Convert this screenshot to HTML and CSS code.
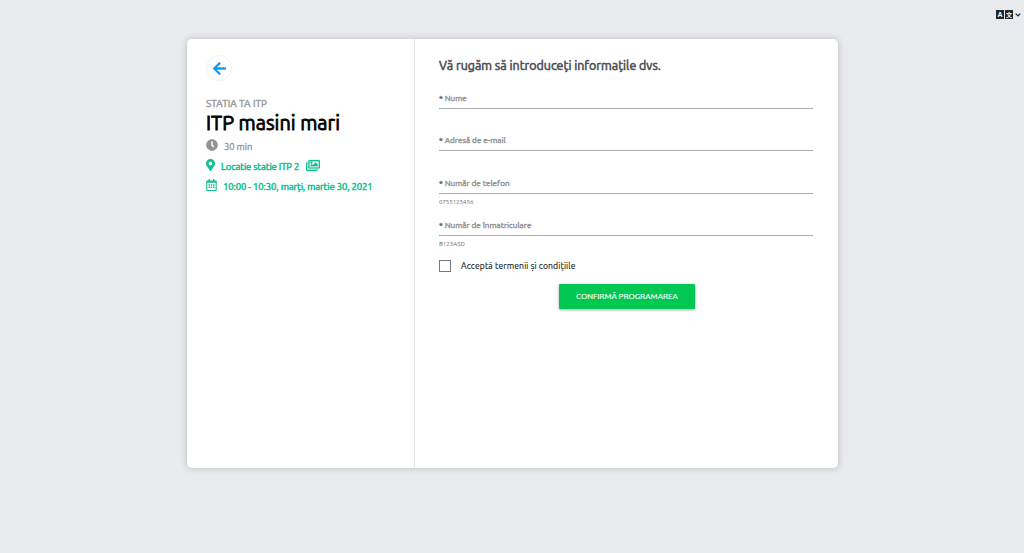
FILE: index.html
```html
<!doctype html>
<html lang="ro">
<head>
    <meta charset="utf-8">
    <meta name="viewport" content="width=device-width, initial-scale=1.0">
    <title>ITP masini mari</title>
    <link rel="stylesheet" href="styles.css">
</head>
<body>
    <header class="topbar">
        <button type="button" class="lang" aria-label="Limba">
            <span class="lang-box">A</span>
            <span class="lang-box lang-cjk">文</span>
            <svg class="chevron" viewBox="0 0 6 4"><path d="M.7.7 3 3 5.3.7"/></svg>
        </button>
    </header>

    <main class="card">
        <aside class="summary">
            <a href="#" class="back" aria-label="Inapoi">
                <svg viewBox="0 0 448 512"><path d="M257.5 445.1l-22.2 22.2c-9.4 9.4-24.6 9.4-33.9 0L7 273c-9.4-9.4-9.4-24.6 0-33.9L201.4 44.7c9.4-9.4 24.6-9.4 33.9 0l22.2 22.2c9.5 9.5 9.3 25-.4 34.3L136.6 216H424c13.3 0 24 10.7 24 24v32c0 13.3-10.7 24-24 24H136.6l120.5 114.8c9.8 9.3 10 24.8.4 34.3z"/></svg>
            </a>
            <div class="station"><span>STATIA TA ITP</span></div>
            <h1><span>ITP masini mari</span></h1>
            <div class="info duration">
                <svg class="icon-clock" viewBox="0 0 512 512"><path d="M256,8C119,8,8,119,8,256S119,504,256,504,504,393,504,256,393,8,256,8Zm92.49,313h0l-20,25a16,16,0,0,1-22.49,2.5h0l-67-49.72a40,40,0,0,1-15-31.23V112a16,16,0,0,1,16-16h32a16,16,0,0,1,16,16V256l58,42.5A16,16,0,0,1,348.49,321Z"/></svg>
                <span>30 min</span>
            </div>
            <div class="info place">
                <svg class="icon-pin" viewBox="0 0 384 512"><path d="M172.268 501.67C26.97 291.031 0 269.413 0 192 0 85.961 85.961 0 192 0s192 85.961 192 192c0 77.413-26.97 99.031-172.268 309.67-9.535 13.774-29.93 13.773-39.464 0zM192 272c44.183 0 80-35.817 80-80s-35.817-80-80-80-80 35.817-80 80 35.817 80 80 80z"/></svg>
                <span>Locatie statie ITP 2</span>
                <svg class="icon-images" viewBox="0 0 576 512"><path d="M480 416v16c0 26.51-21.49 48-48 48H48c-26.51 0-48-21.49-48-48V176c0-26.51 21.49-48 48-48h16v48H54a6 6 0 0 0-6 6v244a6 6 0 0 0 6 6h372a6 6 0 0 0 6-6v-10h48zm42-336H150a6 6 0 0 0-6 6v244a6 6 0 0 0 6 6h372a6 6 0 0 0 6-6V86a6 6 0 0 0-6-6zm6-48c26.51 0 48 21.49 48 48v256c0 26.51-21.49 48-48 48H144c-26.51 0-48-21.49-48-48V80c0-26.51 21.49-48 48-48h384zM264 144c0 22.091-17.909 40-40 40s-40-17.909-40-40 17.909-40 40-40 40 17.909 40 40zm-72 96l39.515-39.515c4.686-4.686 12.284-4.686 16.971 0L288 240l103.515-103.515c4.686-4.686 12.284-4.686 16.971 0L480 208v80H192v-48z"/></svg>
            </div>
            <div class="info date">
                <svg class="icon-calendar" viewBox="0 0 448 512"><path d="M148 288h-40c-6.6 0-12-5.4-12-12v-40c0-6.6 5.4-12 12-12h40c6.6 0 12 5.4 12 12v40c0 6.6-5.4 12-12 12zm108-12v-40c0-6.6-5.4-12-12-12h-40c-6.6 0-12 5.4-12 12v40c0 6.6 5.4 12 12 12h40c6.6 0 12-5.4 12-12zm96 0v-40c0-6.6-5.4-12-12-12h-40c-6.6 0-12 5.4-12 12v40c0 6.6 5.4 12 12 12h40c6.6 0 12-5.4 12-12zm-96 96v-40c0-6.6-5.4-12-12-12h-40c-6.6 0-12 5.4-12 12v40c0 6.6 5.4 12 12 12h40c6.6 0 12-5.4 12-12zm-96 0v-40c0-6.6-5.4-12-12-12h-40c-6.6 0-12 5.4-12 12v40c0 6.6 5.4 12 12 12h40c6.6 0 12-5.4 12-12zm192 0v-40c0-6.6-5.4-12-12-12h-40c-6.6 0-12 5.4-12 12v40c0 6.6 5.4 12 12 12h40c6.6 0 12-5.4 12-12zm96-260v352c0 26.5-21.5 48-48 48H48c-26.5 0-48-21.5-48-48V112c0-26.5 21.5-48 48-48h48V12c0-6.6 5.4-12 12-12h40c6.6 0 12 5.4 12 12v52h128V12c0-6.6 5.4-12 12-12h40c6.6 0 12 5.4 12 12v52h48c26.5 0 48 21.5 48 48zm-48 346V160H48v298c0 3.3 2.7 6 6 6h340c3.3 0 6-2.7 6-6z"/></svg>
                <span>10:00 - 10:30, marți, martie 30, 2021</span>
            </div>
        </aside>

        <form class="details">
            <h2><span>Vă rugăm să introduceți informațile dvs.</span></h2>
            <div class="field">
                <label for="nume"><b>*</b> Nume</label>
                <input type="text" id="nume">
            </div>
            <div class="field">
                <label for="email"><b>*</b> Adresă de e-mail</label>
                <input type="email" id="email">
            </div>
            <div class="field">
                <label for="telefon"><b>*</b> Număr de telefon</label>
                <input type="tel" id="telefon">
                <small>0755123456</small>
            </div>
            <div class="field">
                <label for="numar"><b>*</b> Număr de înmatriculare</label>
                <input type="text" id="numar">
                <small>B123ASD</small>
            </div>
            <label class="terms">
                <input type="checkbox">
                <span>Acceptă termenii și condițiile</span>
            </label>
            <button type="button" class="confirm"><span>CONFIRMĂ PROGRAMAREA</span></button>
        </form>
    </main>
</body>
</html>
```
FILE: styles.css
```css
* {
    box-sizing: border-box;
}

html, body {
    height: 100%;
    margin: 0;
}

body {
    background: #e9eaee;
    font-family: Ubuntu, "Noto Sans", sans-serif;
    overflow: hidden;
}

svg {
    display: block;
    fill: currentColor;
    flex: none;
}

.topbar {
    height: 39px;
    padding: 10px 3px 0 0;
    display: flex;
    justify-content: flex-end;
    align-items: flex-start;
}

.lang {
    display: flex;
    align-items: center;
    gap: 1px;
    padding: 0;
    border: 0;
    background: none;
    color: #23262d;
}

.lang-box {
    width: 8px;
    height: 9px;
    background: #23262d;
    color: #fff;
    font: bold 7px/9px "Liberation Sans", sans-serif;
    text-align: center;
}

.lang-cjk {
    font-family: "Noto Sans CJK SC", sans-serif;
    font-size: 6px;
}

.chevron {
    width: 6px;
    height: 4px;
    margin: 1px 0 0 1px;
    fill: none;
    stroke: currentColor;
    stroke-width: 1.2;
}

.card {
    width: 651px;
    height: 429px;
    margin-left: 187px;
    display: flex;
    background: #fff;
    border-radius: 5px;
    box-shadow: 0 0 6px 1px rgba(0, 0, 0, .15);
}

.summary {
    width: 228px;
    padding: 16px 0 0 19px;
    border-right: 1px solid #e4e5e8;
    white-space: nowrap;
}

.back {
    width: 26px;
    height: 26px;
    display: flex;
    align-items: center;
    justify-content: center;
    border: 1px solid #f1f1f3;
    border-radius: 50%;
    color: #0b9cfb;
}

.back svg {
    width: 13px;
    height: 15px;
}

.station {
    margin-top: 15px;
    height: 15px;
    font-size: 10px;
    line-height: 15px;
    color: #9b9ca0;
    -webkit-text-stroke: .45px;
}

h1 {
    margin: 0;
    height: 26px;
    font-size: 19.9px;
    line-height: 24px;
    font-weight: 400;
    color: #000;
    -webkit-text-stroke: .8px;
}

.info {
    height: 20px;
    display: flex;
    align-items: center;
    font-size: 9.5px;
    letter-spacing: -.1px;
    color: #12bf95;
    -webkit-text-stroke: .5px;
}

.duration {
    height: 18px;
    margin-bottom: 1px;
    color: #929397;
    -webkit-text-stroke: .3px;
}

.icon-clock {
    width: 12px;
    height: 12px;
    margin: -2px 6px 0 0;
}

.icon-pin {
    width: 9px;
    height: 12px;
    margin: -2px 6px 0 0;
}

.icon-images {
    width: 14px;
    height: 13px;
    margin: -2px 0 0 7px;
    stroke: currentColor;
    stroke-width: 12;
}

.icon-calendar {
    width: 11px;
    height: 12px;
    margin: -2px 6px 0 0;
}

.details {
    width: 423px;
    padding: 16px 25px 0 24px;
}

h2 {
    margin: 0;
    height: 21px;
    font-size: 12.45px;
    line-height: 21px;
    font-weight: 400;
    color: #4b4e53;
    white-space: nowrap;
    -webkit-text-stroke: .55px;
}

.field {
    height: 42.4px;
    padding-top: 15px;
}

.field label {
    display: block;
    height: 13px;
    font-size: 8.2px;
    line-height: 14px;
    color: #939498;
    -webkit-text-stroke: .4px;
}

.field label b {
    font-weight: 400;
    color: #66686c;
}

.field input {
    display: block;
    width: 100%;
    height: 5px;
    padding: 0;
    border: 0;
    border-bottom: 1px solid #acacae;
    background: none;
    outline: 0;
}

.field small {
    display: block;
    margin-top: 3px;
    font-size: 6.1px;
    line-height: 10px;
    color: #66676a;
}

.terms {
    margin-top: 13px;
    height: 14px;
    display: flex;
    align-items: center;
    font-size: 8.6px;
    letter-spacing: .12px;
    color: #212328;
    -webkit-text-stroke: .15px;
}

.terms input {
    appearance: none;
    width: 12px;
    height: 12px;
    margin: 1px 10px 0 0;
    border: 1px solid #77787b;
}

.confirm {
    display: block;
    width: 136px;
    height: 25px;
    margin: 11px 0 0 120px;
    padding: 0;
    border: 0;
    border-radius: 1px;
    background: #00c853;
    box-shadow: 0 1px 3px rgba(0, 0, 0, .35);
    color: #fff;
    font: 400 8.1px/25px Ubuntu, "Noto Sans", sans-serif;
    -webkit-text-stroke: .15px;
}
```
